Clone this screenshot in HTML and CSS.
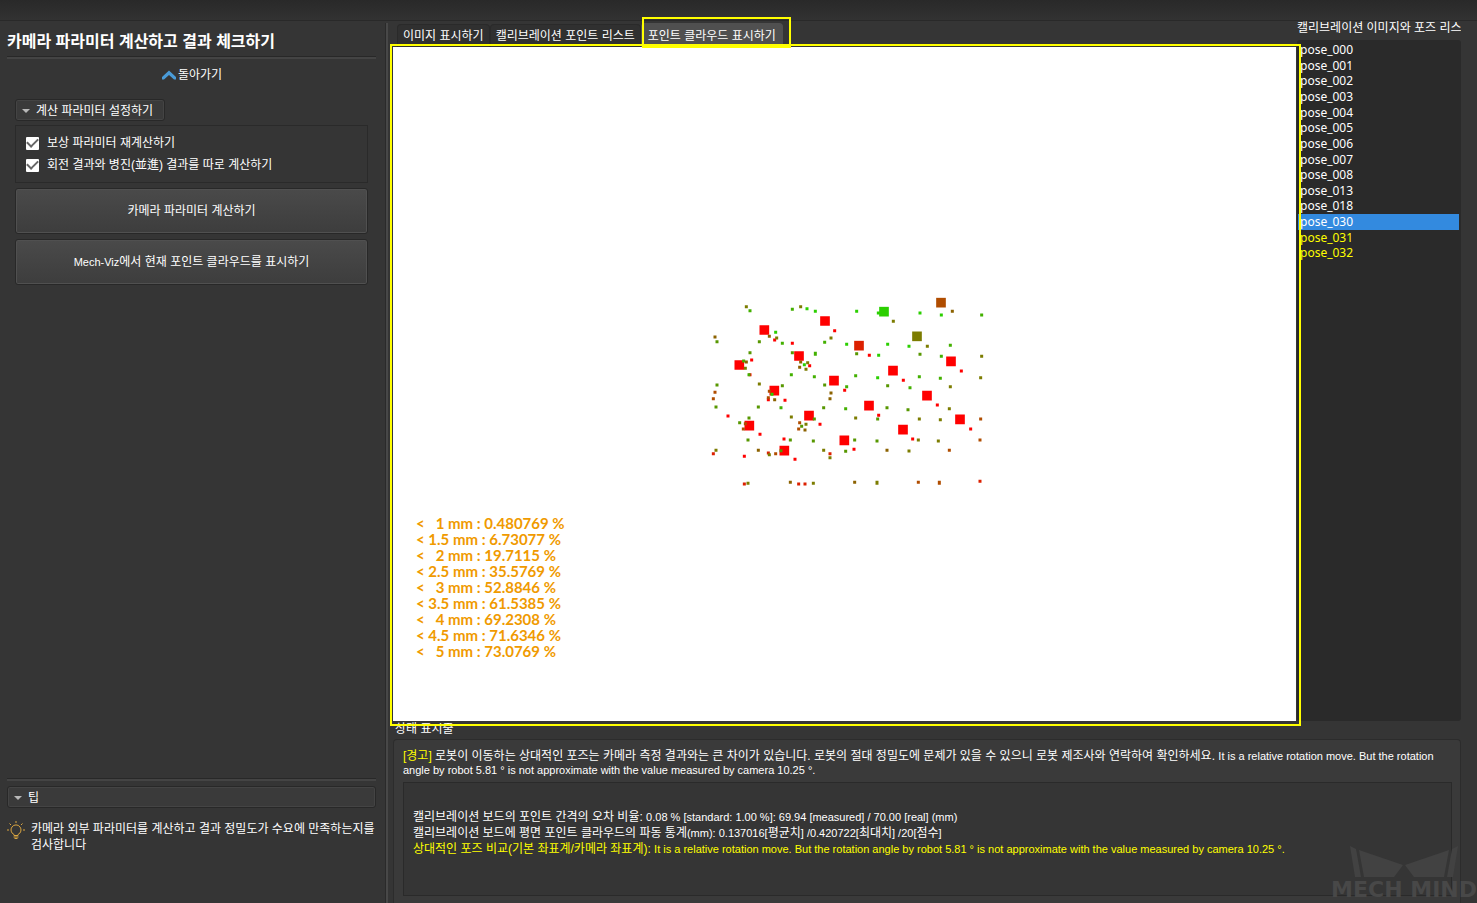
FILE: index.html
```html
<!DOCTYPE html>
<html lang="ko">
<head>
<meta charset="utf-8">
<title>카메라 파라미터 계산하고 결과 체크하기</title>
<link rel="stylesheet" href="styles.css">
</head>
<body>
<div class="app">
  <header class="topbar"></header>
  <div class="workspace">
    <aside class="sidebar">
      <h1 class="title">카메라 파라미터 계산하고 결과 체크하기</h1>
      <hr class="rule">
      <button class="back" type="button">
        <svg class="back-icon" viewBox="0 0 16 10" aria-hidden="true"><path d="M1 9.500V7L8 0.500 15 7V9.500H13L8 5 3 9.500Z"/></svg>돌아가기
      </button>
      <div class="settings">
        <button class="fold" type="button"><span class="arrow"></span>계산 파라미터 설정하기</button>
        <div class="options">
          <label class="option"><input class="check" type="checkbox" checked>보상 파라미터 재계산하기</label>
          <label class="option"><input class="check" type="checkbox" checked>회전 결과와 병진(並進) 결과를 따로 계산하기</label>
        </div>
        <button class="action" type="button">카메라 파라미터 계산하기</button>
        <button class="action" type="button"><span class="latin">Mech-Viz</span>에서 현재 포인트 클라우드를 표시하기</button>
      </div>
      <div class="tips">
        <hr class="rule">
        <button class="fold fold-wide" type="button"><span class="arrow"></span>팁</button>
        <div class="tip">
          <svg class="bulb" viewBox="0 0 18 18" aria-hidden="true"><path d="M7 14.500V13.500A5 5 0 1 1 11 13.500V14.500ZM6.500 16h5M7.500 17.500h3M9 0v2M2.500 2.500 4 4M15.500 2.500 14 4M0 9h2M16 9h2"/></svg>
          <p class="tip-text">카메라 외부 파라미터를 계산하고 결과 정밀도가 수요에 만족하는지를 검사합니다</p>
        </div>
      </div>
    </aside>
    <div class="splitter"></div>
    <main class="main">
      <div class="panes">
        <section class="viewer">
          <div class="tabs" role="tablist">
            <button class="tab" type="button" role="tab">이미지 표시하기</button>
            <button class="tab" type="button" role="tab">캘리브레이션 포인트 리스트</button>
            <button class="tab tab-active" type="button" role="tab" aria-selected="true">포인트 클라우드 표시하기<span class="mark mark-tab"></span></button>
          </div>
          <div class="canvas">
            <svg class="cloud" viewBox="0 0 903 674" role="img" aria-label="포인트 클라우드">
              <g transform="translate(307 243) scale(0.33333)">
                <g class="big">
                  <path class="c-red" d="M193 120h0M375 93h0M118 225h0M297 198h0M402 272h0M223 302h0M327 377h0M148 407h0M253 482h0M433 451h0M579 242h0M753 214h0M681 317h0M507 347h0M609 419h0M780 388h0"/>
                  <path class="c-crimson" d="M477 167h0"/>
                  <path class="c-green" d="M552 65h0"/>
                  <path class="c-olive" d="M651 139h0"/>
                  <path class="c-brown" d="M723 38h0"/>
                </g>
                <g class="small">
                  <path class="c-red" d="M404 122h0M224 150h0M277 160h0M155 210h0M329 227h0M150 254h0M434 301h0M205 329h0M255 331h0M84 378h0M360 403h0M180 433h0M252 447h0M133 499h0M285 508h0M508 196h0M784 243h0M610 271h0M712 345h0M536 376h0M812 417h0M638 447h0M462 478h0"/>
                  <path class="c-crimson" d="M40 491h0M205 489h0M390 491h0M133 582h0M296 582h0M315 582h0M840 574h0"/>
                  <path class="c-green" d="M346 64h0M227 127h0M440 163h0M313 224h0M216 313h0M321 56h0M470 64h0M535 69h0M660 69h0M724 75h0M563 163h0M627 169h0M536 196h0M533 263h0"/>
                  <path class="c-lime" d="M150 62h0M277 58h0M247 160h0M374 157h0M131 213h0M346 190h0M346 193h0M274 254h0M147 254h0M343 260h0M440 290h0M243 353h0M437 356h0M845 75h0M751 166h0M724 199h0M467 257h0M658 260h0M721 265h0M630 293h0"/>
                  <path class="c-moss" d="M51 155h0M178 155h0M150 188h0M277 188h0M51 285h0M247 287h0M374 285h0M48 351h0M175 351h0M147 384h0M371 353h0M119 398h0M343 387h0M305 409h0M144 450h0M271 450h0M340 453h0M437 484h0M243 482h0M470 191h0M660 193h0M563 287h0M561 353h0M624 359h0M533 387h0M464 450h0M531 453h0"/>
                  <path class="c-olive" d="M139 50h0M302 50h0M230 144h0M393 144h0M323 218h0M136 235h0M318 238h0M178 282h0M274 381h0M318 403h0M48 481h0M208 494h0M371 481h0M390 503h0M144 580h0M340 580h0M580 94h0M682 169h0M845 199h0M842 263h0M751 290h0M748 356h0M467 384h0M658 387h0M721 389h0M655 450h0M715 453h0M627 483h0M531 577h0M531 580h0"/>
                  <path class="c-umber" d="M45 141h0M208 139h0M139 216h0M302 216h0M299 232h0M393 309h0M390 326h0M224 329h0M315 420h0M175 481h0M271 577h0M757 64h0M561 481h0M464 577h0"/>
                  <path class="c-brown" d="M45 307h0M40 326h0M208 304h0M205 323h0M299 398h0M136 401h0M130 417h0M296 417h0M227 491h0M842 387h0M840 450h0M748 481h0M655 577h0M718 577h0M718 580h0"/>
                </g>
              </g>
            </svg>
            <pre class="stats">&lt;   1 mm : 0.480769 %
&lt; 1.5 mm : 6.73077 %
&lt;   2 mm : 19.7115 %
&lt; 2.5 mm : 35.5769 %
&lt;   3 mm : 52.8846 %
&lt; 3.5 mm : 61.5385 %
&lt;   4 mm : 69.2308 %
&lt; 4.5 mm : 71.6346 %
&lt;   5 mm : 73.0769 %</pre>
            <span class="mark mark-canvas"></span>
          </div>
        </section>
        <section class="poses">
          <h2 class="poses-title">캘리브레이션 이미지와 포즈 리스트</h2>
          <div class="pose-panel">
            <ul class="pose-list" role="listbox">
              <li class="pose">pose_000</li>
              <li class="pose">pose_001</li>
              <li class="pose">pose_002</li>
              <li class="pose">pose_003</li>
              <li class="pose">pose_004</li>
              <li class="pose">pose_005</li>
              <li class="pose">pose_006</li>
              <li class="pose">pose_007</li>
              <li class="pose">pose_008</li>
              <li class="pose">pose_013</li>
              <li class="pose">pose_018</li>
              <li class="pose pose-selected">pose_030</li>
              <li class="pose pose-warn">pose_031</li>
              <li class="pose pose-warn">pose_032</li>
            </ul>
          </div>
        </section>
      </div>
      <section class="status">
        <h2 class="status-title">상태 표시줄</h2>
        <div class="status-box">
          <p class="message"><span class="warn">[경고]</span> 로봇이 이동하는 상대적인 포즈는 카메라 측정 결과와는 큰 차이가 있습니다. 로봇의 절대 정밀도에 문제가 있을 수 있으니 로봇 제조사와 연락하여 확인하세요. <span class="latin">It is a relative rotation move. But the rotation angle by robot 5.81 ° is not approximate with the value measured by camera 10.25 °.</span></p>
          <div class="log">
            <p class="log-line">캘리브레이션 보드의 포인트 간격의 오차 비율: <span class="latin">0.08 % [standard: 1.00 %]: 69.94 [measured] / 70.00 [real] (mm)</span></p>
            <p class="log-line">캘리브레이션 보드에 평면 포인트 클라우드의 파동 통계<span class="latin">(mm): 0.137016[</span>평균치<span class="latin">] /0.420722[</span>최대치<span class="latin">] /20[</span>점수<span class="latin">]</span></p>
            <p class="log-line warn">상대적인 포즈 비교(기본 좌표계/카메라 좌표계): <span class="latin">It is a relative rotation move. But the rotation angle by robot 5.81 ° is not approximate with the value measured by camera 10.25 °.</span></p>
          </div>
        </div>
      </section>
    </main>
  </div>
  <div class="watermark">
    <svg class="watermark-logo" viewBox="0 0 108 32" aria-hidden="true"><path d="M0 0 6 3 11 31H5ZM9 4 53 19 44 31H14ZM108 0 102 3 97 31H103ZM99 4 55 19 64 31H94Z"/></svg>
    <span class="watermark-name">MECH MIND</span>
  </div>
</div>
</body>
</html>
```
FILE: styles.css
```css
* {
  box-sizing: border-box;
}

body {
  margin: 0;
  background: #353535;
  color: #fff;
  font: 12px/16px "Liberation Sans", "Noto Sans CJK KR", sans-serif;
}

h1, h2, p, ul, pre {
  margin: 0;
  padding: 0;
}

button {
  margin: 0;
  color: inherit;
  font: inherit;
}

.latin {
  font-size: 11px;
}

.app {
  position: relative;
  display: flex;
  flex-direction: column;
  height: 100vh;
  overflow: hidden;
}

.topbar {
  flex: none;
  height: 21px;
  background: linear-gradient(#292929, #323232);
  border-bottom: 1px solid #292929;
}

.workspace {
  flex: 1;
  display: flex;
  min-height: 0;
}

/* Sidebar */

.sidebar {
  flex: none;
  width: 385px;
  padding: 9px 9px 0 7px;
  display: flex;
  flex-direction: column;
}

.title {
  font-size: 16px;
  line-height: 24px;
  font-weight: 700;
}

.rule {
  width: 100%;
  height: 3px;
  margin: 2px 0 0;
  border: 0;
  border-top: 1px solid #282828;
  background: #444;
}

.back {
  align-self: center;
  display: flex;
  align-items: center;
  margin-top: 8px;
  padding: 0;
  border: 0;
  background: none;
}

.back-icon {
  width: 16px;
  height: 10px;
  margin-right: 1px;
  fill: #4a9bd8;
}

.settings {
  display: flex;
  flex-direction: column;
  padding: 16px 8px 0;
}

.fold {
  align-self: flex-start;
  display: flex;
  align-items: center;
  height: 22px;
  padding: 1px 11px 0 6px;
  border: 1px solid #282828;
  border-radius: 3px;
  background: #3a3a3a;
  box-shadow: inset 0 0 0 1px #444;
}

.fold-wide {
  align-self: stretch;
}

.arrow {
  margin-right: 6px;
  border: 4px solid transparent;
  border-top-color: #b8b8b8;
  border-bottom: 0;
}

.options {
  display: flex;
  flex-direction: column;
  gap: 6px;
  margin-top: 4px;
  padding: 9px 10px;
  border: 1px solid #2a2a2a;
}

.option {
  display: flex;
  align-items: center;
  gap: 8px;
}

.check {
  appearance: none;
  width: 13px;
  height: 13px;
  margin: 0;
  border-radius: 1px;
  background: #fff;
  display: grid;
  place-items: center;
}

.check:checked::before {
  content: "";
  width: 9px;
  height: 5px;
  margin-bottom: 3px;
  border: solid #666;
  border-width: 0 0 2px 2px;
  transform: rotate(-45deg);
}

.action {
  height: 46px;
  margin-top: 5px;
  border: 1px solid #282828;
  border-radius: 3px;
  background: linear-gradient(#4a4a4a, #3d3d3d);
  box-shadow: inset 0 0 0 1px #505050;
}

.tips {
  display: flex;
  flex-direction: column;
  margin-top: auto;
  padding-bottom: 50px;
}

.tips .fold {
  margin-top: 5px;
}

.tip {
  display: flex;
  margin-top: 13px;
}

.bulb {
  flex: none;
  width: 18px;
  height: 18px;
  margin-right: 6px;
  fill: none;
  stroke: #dba640;
}

.tip-text {
  flex: 1;
  margin-right: -4px;
}

.splitter {
  flex: none;
  width: 3px;
  margin-top: 2px;
  border-left: 1px solid #2a2a2a;
  background: #484848;
}

/* Viewer and pose list */

.main {
  flex: 1;
  min-width: 0;
  display: flex;
  flex-direction: column;
  padding: 0 16px 0 5px;
}

.panes {
  flex: 1;
  min-height: 0;
  display: flex;
  gap: 1px;
}

.viewer {
  flex: 1;
  min-width: 0;
  display: flex;
  flex-direction: column;
}

.tabs {
  display: flex;
  align-items: flex-end;
  height: 26px;
  padding-left: 4px;
}

.tab {
  position: relative;
  height: 23px;
  padding: 0 5px;
  border: 1px solid #2a2a2a;
  border-bottom: 0;
  border-radius: 4px 4px 0 0;
  background: #303030;
}

.tab-active {
  height: 24px;
  padding: 0 6px;
  border-color: #505050;
  background: #505050;
}

.mark {
  position: absolute;
  z-index: 1;
  border: 2px solid #ffff00;
  pointer-events: none;
}

.mark-tab {
  inset: -7px -9px -1px 0;
}

.canvas {
  position: relative;
  flex: 1;
  min-height: 0;
  background: #fff;
}

.mark-canvas {
  inset: -3px -5px -5px -3px;
}

.cloud {
  position: absolute;
  inset: 0;
  width: 100%;
  height: 100%;
  stroke-linecap: square;
}

.big {
  stroke-width: 29;
}

.small {
  stroke-width: 9;
}

.c-red { stroke: #ff0000; }
.c-crimson { stroke: #dc2000; }
.c-green { stroke: #2bcf00; }
.c-lime { stroke: #43b000; }
.c-moss { stroke: #579700; }
.c-olive { stroke: #7c7c00; }
.c-umber { stroke: #8c6200; }
.c-brown { stroke: #b04d00; }

.stats {
  position: absolute;
  left: 23px;
  bottom: 62px;
  color: #f09a00;
  font: 700 15px/16px Lato, sans-serif;
}

.poses {
  flex: none;
  width: 164px;
  display: flex;
  flex-direction: column;
}

.poses-title {
  height: 19px;
  line-height: 14px;
  overflow: hidden;
  font-size: 12px;
  font-weight: 400;
  white-space: nowrap;
}

.pose-panel {
  flex: 1;
  padding: 2px 2px 0 1px;
  border-radius: 3px;
  background: #2a2a2a;
}

.pose-list {
  display: grid;
  grid-auto-rows: 1fr;
  height: 219px;
  list-style: none;
  font-family: "Noto Sans", sans-serif;
}

.pose {
  min-height: 0;
  padding-left: 2px;
}

.pose-selected {
  background: #338adf;
}

.pose-warn,
.warn {
  color: #ffff00;
}

/* Status */

.status-title {
  padding: 0 0 2px 2px;
  font-size: 12px;
  font-weight: 400;
}

.status-box {
  display: flex;
  flex-direction: column;
  gap: 5px;
  padding: 9px 8px 7px 9px;
  border: 1px solid #2c2c2c;
  border-bottom: 0;
  border-radius: 4px 4px 0 0;
  background: #3a3a3a;
}

.message {
  line-height: 14px;
}

.log {
  padding: 26px 9px 38px;
  border: 1px solid #2a2a2a;
  background: #353535;
}

.watermark {
  position: absolute;
  right: 0;
  bottom: 1px;
  display: flex;
  flex-direction: column;
  align-items: center;
  color: #484848;
  pointer-events: none;
}

.watermark-logo {
  width: 108px;
  height: 32px;
  fill: #424242;
}

.watermark-name {
  font: 700 22px/24px "DejaVu Sans", sans-serif;
}
```
